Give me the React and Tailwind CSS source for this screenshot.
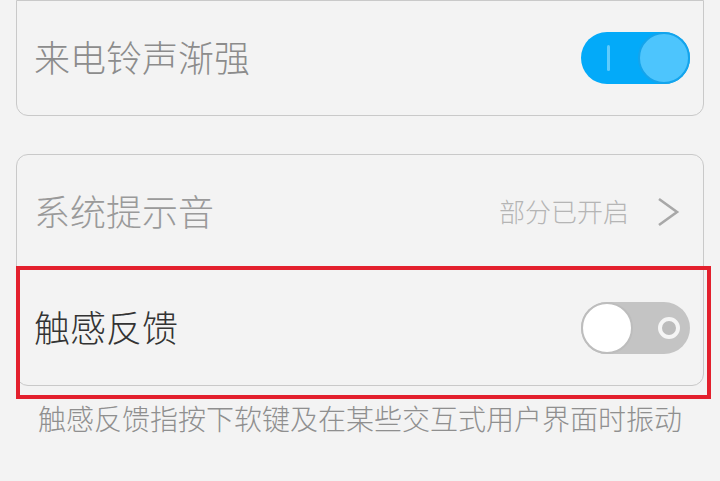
import React from "react";

const font = { fontFamily: '"Noto Sans CJK SC", "Noto Sans", sans-serif' };

function ToggleOn() {
  return (
    <div className="relative flex h-[52px] w-[109px] shrink-0 items-center rounded-full bg-[#03aaf9]">
      <div className="ml-[26px] h-[26px] w-[3px] rounded-full bg-[#5fcbfc]" />
      <div className="absolute right-0 top-0 h-[52px] w-[52px] rounded-full border-2 border-[#14a4ec] bg-[#4dc5fd]" />
    </div>
  );
}

function ToggleOff() {
  return (
    <div className="relative flex h-[52px] w-[109px] shrink-0 items-center justify-end rounded-full bg-[#c4c4c4] pr-[10px]">
      <div className="absolute left-0 top-0 h-[52px] w-[52px] rounded-full border-2 border-[#bdbdbd] bg-white" />
      <div className="h-[22px] w-[22px] rounded-full border-[4px] border-[#f5f5f5] bg-[#bcbcbc]" />
    </div>
  );
}

export default function App() {
  return (
    <div className="relative h-[481px] w-[720px] overflow-hidden bg-[#f3f3f3]" style={font}>
      <div className="mx-[16px] flex h-[116px] items-center justify-between rounded-b-xl border border-[#c9c9c9] pl-[17px] pr-[13px]">
        <span className="mb-[4px] text-[36px] font-light leading-none text-[#8c8c8c]">来电铃声渐强</span>
        <ToggleOn />
      </div>

      <div className="mx-[16px] mt-[38px] rounded-xl border border-[#c9c9c9]">
        <div className="flex h-[114px] items-center justify-between pl-[17px] pr-[22px]">
          <span className="mb-[4px] text-[36px] font-light leading-none text-[#9a9a9a]">系统提示音</span>
          <div className="flex items-center gap-[26px]">
            <span className="mb-[2px] text-[26px] font-light leading-none text-[#b5b5b5]">部分已开启</span>
            <svg width="26" height="32" viewBox="0 0 26 32" fill="none">
              <polyline points="4,3 22,16 4,29" stroke="#a8a8a8" strokeWidth="2.6" strokeLinejoin="miter" />
            </svg>
          </div>
        </div>
        <div className="flex h-[116px] items-center justify-between border-t border-[#d4d4d4] pl-[17px] pr-[13px]">
          <span className="mb-[4px] text-[36px] font-light leading-none text-[#333333]">触感反馈</span>
          <ToggleOff />
        </div>
      </div>

      <p className="mt-[18px] pl-[38px] text-[28px] font-light leading-none text-[#8f8f8f]">
        触感反馈指按下软键及在某些交互式用户界面时振动
      </p>

      <div className="absolute left-[16px] top-[266px] h-[133px] w-[695px] border-[4px] border-[#e3202d]" />
    </div>
  );
}
